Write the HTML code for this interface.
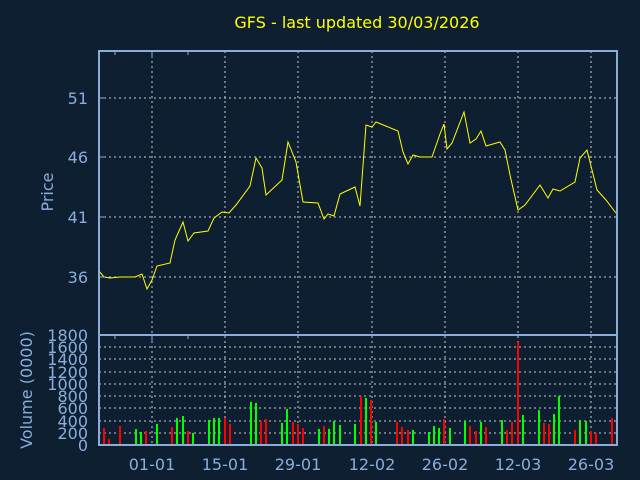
<!DOCTYPE html>
<html><head><meta charset="utf-8"><style>
html,body{margin:0;padding:0;background:#0f1f32;}
svg{display:block;font-family:"DejaVu Sans","Liberation Sans",sans-serif;}
</style></head><body>
<svg width="640" height="480" viewBox="0 0 640 480" xmlns="http://www.w3.org/2000/svg">
<rect width="640" height="480" fill="#0f1f32"/>
<text x="357" y="28" fill="#ffff00" font-size="16" text-anchor="middle">GFS - last updated 30/03/2026</text>
<g stroke="#c8c8c8" stroke-width="1" stroke-dasharray="2,3">
<line x1="152" y1="51" x2="152" y2="445"/><line x1="225" y1="51" x2="225" y2="445"/><line x1="298" y1="51" x2="298" y2="445"/><line x1="372" y1="51" x2="372" y2="445"/><line x1="445" y1="51" x2="445" y2="445"/><line x1="518" y1="51" x2="518" y2="445"/><line x1="591" y1="51" x2="591" y2="445"/>
<line x1="99" y1="98" x2="617" y2="98"/><line x1="99" y1="157" x2="617" y2="157"/><line x1="99" y1="217" x2="617" y2="217"/><line x1="99" y1="277" x2="617" y2="277"/>
<line x1="99" y1="347" x2="617" y2="347"/><line x1="99" y1="359" x2="617" y2="359"/><line x1="99" y1="372" x2="617" y2="372"/><line x1="99" y1="384" x2="617" y2="384"/><line x1="99" y1="396" x2="617" y2="396"/><line x1="99" y1="408" x2="617" y2="408"/><line x1="99" y1="421" x2="617" y2="421"/><line x1="99" y1="433" x2="617" y2="433"/>
</g>
<g stroke-width="2">
<g stroke="#ff0000">
<line x1="104" y1="445" x2="104" y2="428"/><line x1="109" y1="445" x2="109" y2="439"/><line x1="120" y1="445" x2="120" y2="426"/><line x1="146" y1="445" x2="146" y2="431"/><line x1="172" y1="445" x2="172" y2="427"/><line x1="188" y1="445" x2="188" y2="431"/>
<line x1="225" y1="445" x2="225" y2="418"/><line x1="230" y1="445" x2="230" y2="424"/><line x1="261" y1="445" x2="261" y2="421"/><line x1="266" y1="445" x2="266" y2="419"/><line x1="293" y1="445" x2="293" y2="422"/><line x1="298" y1="445" x2="298" y2="424"/><line x1="303" y1="445" x2="303" y2="428"/><line x1="324" y1="445" x2="324" y2="426"/><line x1="361" y1="445" x2="361" y2="396"/><line x1="371" y1="445" x2="371" y2="400"/><line x1="397" y1="445" x2="397" y2="422"/><line x1="402" y1="445" x2="402" y2="427"/><line x1="408" y1="445" x2="408" y2="430"/><line x1="444" y1="445" x2="444" y2="419"/><line x1="470" y1="445" x2="470" y2="426"/><line x1="476" y1="445" x2="476" y2="431"/><line x1="486" y1="445" x2="486" y2="427"/>
<line x1="507" y1="445" x2="507" y2="430"/><line x1="512" y1="445" x2="512" y2="422"/><line x1="518" y1="445" x2="518" y2="342"/><line x1="544" y1="445" x2="544" y2="423"/><line x1="549" y1="445" x2="549" y2="424"/><line x1="575" y1="445" x2="575" y2="430"/><line x1="591" y1="445" x2="591" y2="431"/><line x1="596" y1="445" x2="596" y2="433"/><line x1="612" y1="445" x2="612" y2="418"/>
</g>
<g stroke="#00ff00">
<line x1="136" y1="445" x2="136" y2="429"/><line x1="141" y1="445" x2="141" y2="432"/><line x1="157" y1="445" x2="157" y2="424"/><line x1="177" y1="445" x2="177" y2="418"/><line x1="183" y1="445" x2="183" y2="416"/><line x1="193" y1="445" x2="193" y2="433"/><line x1="209" y1="445" x2="209" y2="420"/><line x1="214" y1="445" x2="214" y2="418"/><line x1="219" y1="445" x2="219" y2="418"/>
<line x1="251" y1="445" x2="251" y2="402"/><line x1="256" y1="445" x2="256" y2="403"/><line x1="282" y1="445" x2="282" y2="423"/><line x1="287" y1="445" x2="287" y2="409"/><line x1="319" y1="445" x2="319" y2="429"/><line x1="329" y1="445" x2="329" y2="429"/><line x1="334" y1="445" x2="334" y2="421"/><line x1="340" y1="445" x2="340" y2="425"/><line x1="355" y1="445" x2="355" y2="424"/><line x1="366" y1="445" x2="366" y2="398"/><line x1="376" y1="445" x2="376" y2="422"/><line x1="413" y1="445" x2="413" y2="430"/><line x1="429" y1="445" x2="429" y2="432"/><line x1="434" y1="445" x2="434" y2="426"/><line x1="439" y1="445" x2="439" y2="428"/><line x1="450" y1="445" x2="450" y2="428"/><line x1="465" y1="445" x2="465" y2="421"/><line x1="481" y1="445" x2="481" y2="422"/>
<line x1="502" y1="445" x2="502" y2="420"/><line x1="523" y1="445" x2="523" y2="415"/><line x1="539" y1="445" x2="539" y2="410"/><line x1="554" y1="445" x2="554" y2="414"/><line x1="559" y1="445" x2="559" y2="396"/><line x1="580" y1="445" x2="580" y2="420"/><line x1="586" y1="445" x2="586" y2="421"/>
</g>
</g>
<polyline fill="none" stroke="#ffff00" stroke-width="1" points="99,271 104,277 110,278 120,277 135,277 142,274 147,289 152,280 157,266 170,263 175,240 183,222 188,241 194,233 208,231 214,218 222,212 229,213 236,205 250,186 256,158 262,168 266,195 282,180 288,142 296,162 303,202 318,203 324,219 328,214 334,216 340,194 355,187 360,206 366,125 372,127 376,122 398,131 403,152 408,164 413,155 420,157 432,157 440,134 444,124 447,149 452,143 464,112 470,143 476,139 481,131 486,146 500,142 505,150 510,175 518,210 525,205 540,185 548,198 553,189 560,191 575,182 580,158 587,150 597,190 606,200 616,213"/>
<g stroke="#8aaedb" stroke-width="2" fill="none">
<rect x="99" y="51" width="518" height="394"/>
<line x1="99" y1="335" x2="617" y2="335"/>
</g>
<g stroke="#8aaedb" stroke-width="1">
<line x1="99" y1="98" x2="105" y2="98"/><line x1="99" y1="157" x2="105" y2="157"/><line x1="99" y1="217" x2="105" y2="217"/><line x1="99" y1="277" x2="105" y2="277"/>
<line x1="115" y1="51" x2="115" y2="55"/><line x1="188" y1="51" x2="188" y2="55"/><line x1="115" y1="335" x2="115" y2="339"/><line x1="188" y1="335" x2="188" y2="339"/>
<line x1="152" y1="51" x2="152" y2="58"/><line x1="152" y1="335" x2="152" y2="342"/>
</g>
<g fill="#8aaedb" font-size="16" text-anchor="end">
<text x="88" y="104">51</text><text x="88" y="163">46</text><text x="88" y="223">41</text><text x="88" y="283">36</text>
<text x="88" y="341">1800</text><text x="88" y="353">1600</text><text x="88" y="365">1400</text><text x="88" y="378">1200</text><text x="88" y="390">1000</text><text x="88" y="402">800</text><text x="88" y="414">600</text><text x="88" y="427">400</text><text x="88" y="439">200</text><text x="88" y="451">0</text>
</g>
<g fill="#8aaedb" font-size="16" text-anchor="middle">
<text x="152" y="470">01-01</text><text x="225" y="470">15-01</text><text x="298" y="470">29-01</text><text x="372" y="470">12-02</text><text x="445" y="470">26-02</text><text x="518" y="470">12-03</text><text x="591" y="470">26-03</text>
<text transform="translate(53,192) rotate(-90)">Price</text>
<text transform="translate(32,390) rotate(-90)">Volume (0000)</text>
</g>
</svg>
</body></html>
